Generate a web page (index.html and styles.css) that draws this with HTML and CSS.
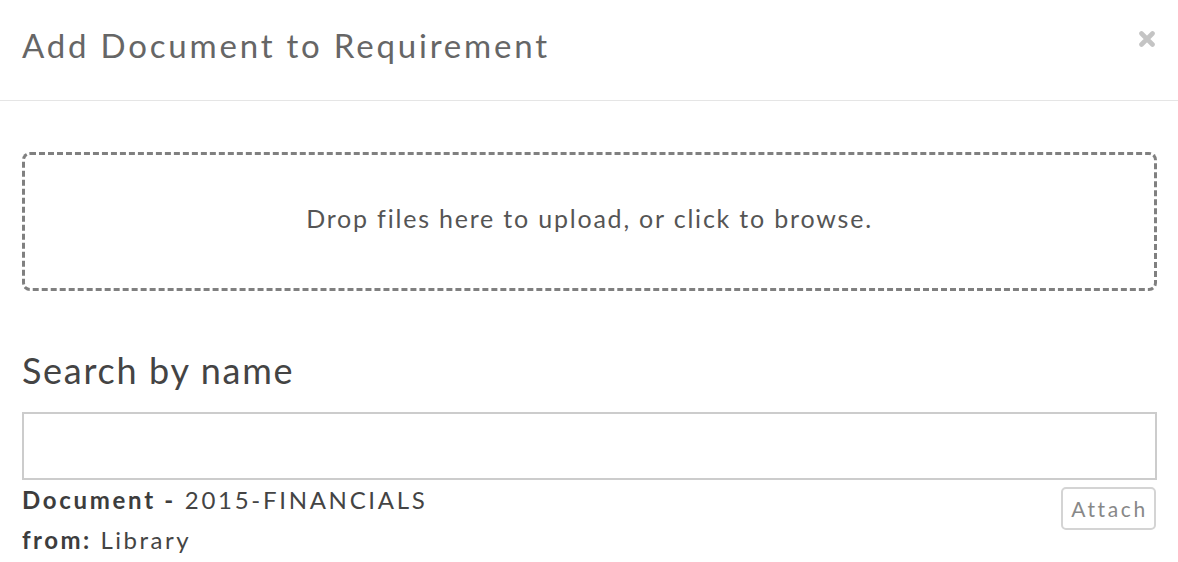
FILE: index.html
```html
<!DOCTYPE html>
<html>
<head>
<meta charset="utf-8">
<link rel="stylesheet" href="styles.css">
</head>
<body>
<div class="modal">
  <div class="modal-header">
    <h3 class="modal-title">Add Document to Requirement</h3>
    <button class="close" aria-label="Close">
      <svg width="16" height="16" viewBox="0 0 16 16"><path d="M2.5 2.5 L13.5 13.5 M13.5 2.5 L2.5 13.5" stroke="#c4c4c4" stroke-width="4.6" stroke-linecap="round"/></svg>
    </button>
  </div>
  <div class="modal-body">
    <div class="dropzone">Drop files here to upload, or click to browse.</div>
    <h3 class="search-title">Search by name</h3>
    <input class="search-input" type="text">
    <div class="result">
      <div class="result-info">
        <div class="line"><b>Document -</b> 2015-FINANCIALS</div>
        <div class="line line-from"><b>from:</b> Library</div>
      </div>
      <button class="attach">Attach</button>
    </div>
  </div>
</div>
</body>
</html>
```
FILE: styles.css
```css
html, body {
  margin: 0;
  padding: 0;
  background: #fff;
}
body {
  font-family: "Lato", "Open Sans", sans-serif;
  color: #444;
}
.modal {
  width: 1178px;
}
.modal-header {
  height: 101px;
  border-bottom: 1px solid #e5e5e5;
  display: flex;
  align-items: flex-start;
  justify-content: space-between;
  padding: 0 22px;
  box-sizing: border-box;
}
.modal-title {
  margin: 0;
  padding-top: 24px;
  font-size: 33px;
  font-weight: 400;
  letter-spacing: 2.8px;
  color: #666;
  line-height: 42px;
}
.close {
  background: none;
  border: 0;
  padding: 0;
  margin-top: 31px;
  margin-right: 1px;
  width: 16px;
  height: 16px;
  display: block;
}
.close svg { display: block; }
.modal-body {
  padding: 51px 21px 0 22px;
}
.dropzone {
  height: 139px;
  box-sizing: border-box;
  border: 3px dashed #808080;
  border-radius: 8px;
  display: flex;
  align-items: center;
  justify-content: center;
  font-size: 25px;
  letter-spacing: 1.8px;
  color: #555;
  padding-bottom: 8px;
}
.search-title {
  margin: 57px 0 0;
  font-size: 36px;
  font-weight: 400;
  letter-spacing: 1.7px;
  line-height: 44px;
  color: #444;
}
.search-input {
  display: block;
  margin-top: 20px;
  width: 100%;
  height: 68px;
  box-sizing: border-box;
  border: 2px solid #cccccc;
  border-radius: 0;
  outline: none;
}
.result {
  display: flex;
  justify-content: space-between;
  align-items: flex-start;
}
.result-info {
  font-size: 24px;
  letter-spacing: 2.7px;
  color: #444;
}
.line {
  line-height: 40px;
}
.line-from {
  letter-spacing: 2.5px;
}
.line b { font-weight: 700; color: #3d3d3d; }
.attach {
  margin-top: 7px;
  margin-right: 1px;
  width: 95px;
  height: 43px;
  background: #fff;
  border: 2px solid #d4d4d4;
  border-radius: 5px;
  font-family: inherit;
  font-size: 21px;
  letter-spacing: 2.6px;
  text-indent: 2px;
  color: #888;
  padding: 0;
}
```
